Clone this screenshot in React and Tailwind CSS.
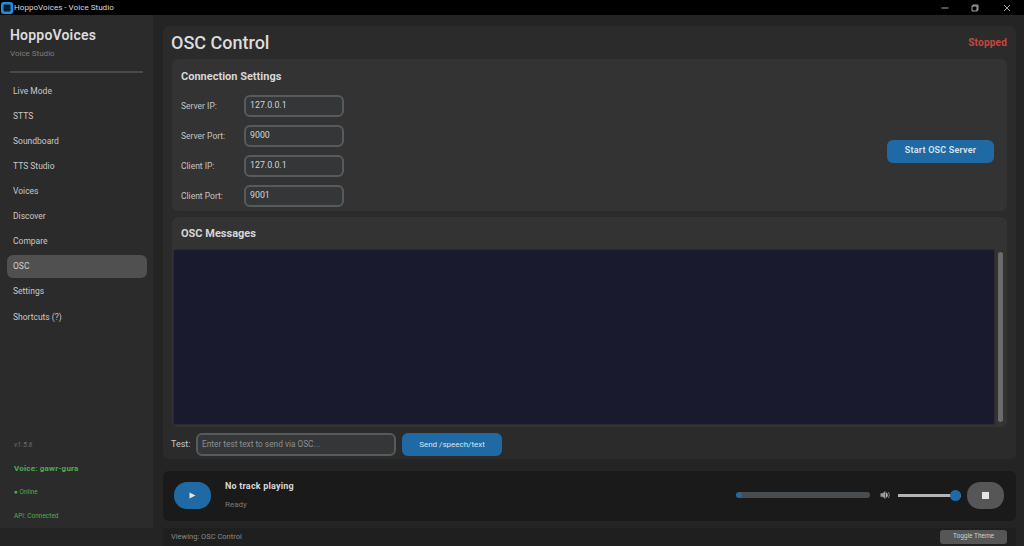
const navItems = [
  "Live Mode",
  "STTS",
  "Soundboard",
  "TTS Studio",
  "Voices",
  "Discover",
  "Compare",
  "OSC",
  "Settings",
];

const connectionFields = [
  ["Server IP:", "127.0.0.1"],
  ["Server Port:", "9000"],
  ["Client IP:", "127.0.0.1"],
  ["Client Port:", "9001"],
];

function TitleBar() {
  return (
    <div className="h-[15px] shrink-0 bg-black flex items-center text-[#d8d8d8]">
      <svg width="12" height="12" viewBox="0 0 12 12" className="ml-px">
        <rect x="0" y="0" width="12" height="12" rx="2.5" fill="#1c8fe0" />
        <rect x="2.5" y="2.5" width="7" height="7" rx="1" fill="#0b1b2a" />
      </svg>
      <span className="ml-px text-[8.1px] leading-none">HoppoVoices - Voice Studio</span>
      <div className="ml-auto flex items-center text-[#d0d0d0]">
        <svg width="8" height="8" viewBox="0 0 8 8" className="mr-[22px]">
          <path d="M0.5 4H7.5" stroke="currentColor" strokeWidth="0.8" />
        </svg>
        <svg width="8" height="8" viewBox="0 0 8 8" className="mr-[24px]">
          <path d="M2 2V1H7V6H6M1 2H6V7H1Z" fill="none" stroke="currentColor" strokeWidth="0.8" />
        </svg>
        <svg width="8" height="8" viewBox="0 0 8 8" className="mr-[13px]">
          <path d="M1 1L7 7M7 1L1 7" stroke="currentColor" strokeWidth="0.8" />
        </svg>
      </div>
    </div>
  );
}

function Sidebar() {
  return (
    <aside className="w-[153px] h-[513px] shrink-0 bg-[#2b2b2b] flex flex-col">
      <div className="pl-[10px] pt-[12px]">
        <div className="text-[14px] leading-[17px] font-semibold tracking-[0.2px] text-[#dcdcdc]">HoppoVoices</div>
        <div className="mt-[5px] text-[8px] leading-[10px] text-[#7d7d7d]">Voice Studio</div>
      </div>
      <div className="mx-[10px] mt-[12px] h-[2px] bg-[#4a4a4a]" />
      <nav className="mt-[7px] ml-[7px] mr-[6px] flex flex-col gap-[2px]">
        {navItems.map((item) => (
          <div
            key={item}
            className={
              item === "OSC"
                ? "h-[23px] flex items-center pl-[6px] rounded-[6px] bg-[#505050] text-[8.5px] text-[#d0d0d0]"
                : "h-[23px] flex items-center pl-[6px] text-[8.5px] text-[#c8c8c8]"
            }
          >
            {item}
          </div>
        ))}
        <div className="h-[25px] flex items-center pl-[6px] text-[8.5px] text-[#c8c8c8]">Shortcuts (?)</div>
      </nav>
      <div className="mt-auto pl-[14px] pb-[7px] flex flex-col">
        <div className="text-[7px] leading-[9px] italic text-[#6f6f6f]">v1.5.6</div>
        <div className="mt-[13px] text-[8px] leading-[11px] font-bold tracking-[0.2px] text-[#4caf50]">Voice: gawr-gura</div>
        <div className="mt-[14px] text-[6.5px] leading-[9px] text-[#4caf50]">● Online</div>
        <div className="mt-[15px] text-[6.5px] leading-[9px] text-[#4caf50]">API: Connected</div>
      </div>
    </aside>
  );
}

function ConnectionCard() {
  return (
    <section className="h-[152px] shrink-0 rounded-[6px] bg-[#333333] pl-[9px] pr-[13px] flex items-center justify-between">
      <div className="self-start">
        <h2 className="pt-[11px] text-[11px] leading-[14px] font-bold text-[#d6d6d6]">Connection Settings</h2>
        <div className="mt-[11px] flex flex-col gap-[8px]">
          {connectionFields.map(([label, value]) => (
            <div key={label} className="flex items-center">
              <span className="w-[63px] text-[8.5px] text-[#c4c4c4]">{label}</span>
              <div className="w-[100px] h-[22px] rounded-[6px] border-2 border-[#565b5e] bg-[#343638] pl-[4px] flex items-center text-[8.8px] text-[#d4d4d4]">
                {value}
              </div>
            </div>
          ))}
        </div>
      </div>
      <button className="mt-[32px] w-[107px] h-[23px] rounded-[6px] bg-[#1f6aa5] text-[9px] font-semibold tracking-[0.2px] text-[#dce4ea]">
        Start OSC Server
      </button>
    </section>
  );
}

function MessagesCard() {
  return (
    <section className="h-[210px] shrink-0 rounded-[6px] bg-[#333333] flex flex-col">
      <h2 className="pl-[9px] pt-[10px] text-[11px] leading-[14px] font-bold text-[#d6d6d6]">OSC Messages</h2>
      <div className="mt-[8px] flex">
        <div className="ml-px w-[822px] h-[176px] rounded-[2px] bg-[#1a1a2e] border border-[#2b2b2b]" />
        <div className="ml-[3px] mt-[3px] w-[5px] h-[170px] rounded-full bg-[#6b6b6b]" />
      </div>
    </section>
  );
}

function TestRow() {
  return (
    <div className="mt-[6px] -ml-px flex items-center">
      <span className="w-[25px] text-[9px] text-[#c8c8c8]">Test:</span>
      <div className="w-[200px] h-[23px] rounded-[6px] border-2 border-[#565b5e] bg-[#343638] pl-[4px] flex items-center text-[8.3px] text-[#8f8f8f]">
        Enter test text to send via OSC...
      </div>
      <button className="ml-[6px] w-[100px] h-[23px] rounded-[6px] bg-[#1f6aa5] text-[8px] text-[#dce4ea]">
        Send /speech/text
      </button>
    </div>
  );
}

function Player() {
  return (
    <div className="mt-[12px] h-[50px] shrink-0 rounded-[6px] bg-[#1a1a1a] flex items-center pl-[11px] pr-[12px] pb-[2px]">
      <button className="w-[37px] h-[27px] rounded-[13px] bg-[#1f6aa5] flex items-center justify-center">
        <svg width="7" height="7" viewBox="0 0 7 7">
          <path d="M0.5 0.5L6.5 3.5L0.5 6.5Z" fill="#e6e6e6" />
        </svg>
      </button>
      <div className="ml-[14px]">
        <div className="text-[9px] leading-[11px] font-bold tracking-[0.2px] text-[#d8d8d8]">No track playing</div>
        <div className="mt-[8px] text-[8px] leading-[10px] text-[#7a7a7a]">Ready</div>
      </div>
      <div className="ml-auto flex items-center">
        <div className="w-[134px] h-[6px] rounded-full bg-[#4a4d50] overflow-hidden">
          <div className="w-[6px] h-full rounded-full bg-[#1f6aa5]" />
        </div>
        <svg width="10" height="10" viewBox="0 0 10 10" className="ml-[10px]">
          <path d="M0.5 3.2H2.6L5.4 1V9L2.6 6.8H0.5Z" fill="#9a9a9a" />
          <path d="M6.2 2.2C8.2 3.4 8.2 6.6 6.2 7.8Z" fill="#d4d4d4" />
          <path d="M8.2 2C9.6 3.6 9.6 6.4 8.2 8" fill="none" stroke="#8a8a8a" strokeWidth="0.9" />
        </svg>
        <div className="ml-[8px] w-[63px] h-[3px] bg-[#b4b4b4] flex items-center justify-end">
          <div className="w-[11px] h-[11px] rounded-full bg-[#1f6aa5] shrink-0" />
        </div>
        <button className="ml-[6px] w-[37px] h-[27px] rounded-[13px] bg-[#565656] flex items-center justify-center">
          <div className="w-[7px] h-[7px] bg-[#e4e4e4]" />
        </button>
      </div>
    </div>
  );
}

function StatusBar() {
  return (
    <div className="mt-[7px] h-[18px] shrink-0 rounded-t-[4px] bg-[#1f1f1f] flex items-center justify-between pl-[8px] pr-[9px]">
      <span className="text-[7.5px] text-[#8a8a8a]">Viewing: OSC Control</span>
      <button className="w-[67px] h-[14px] rounded-[3px] bg-[#565656] text-[6.5px] text-[#cfcfcf]">Toggle Theme</button>
    </div>
  );
}

export default function App() {
  return (
    <div className="w-[1024px] h-[546px] overflow-hidden flex flex-col bg-[#242424] font-['Roboto',sans-serif]">
      <TitleBar />
      <div className="flex-1 flex min-h-0">
        <Sidebar />
        <main className="ml-[10px] mr-[8px] flex-1 flex flex-col pt-[11px]">
          <div className="h-[433px] shrink-0 rounded-[6px] bg-[#2b2b2b] px-[9px] flex flex-col">
            <div className="h-[33px] shrink-0 flex items-center justify-between">
              <h1 className="-ml-px text-[18px] leading-[22px] font-medium text-[#dcdcdc]">OSC Control</h1>
              <span className="text-[10px] font-bold tracking-[0.2px] text-[#c8463c]">Stopped</span>
            </div>
            <ConnectionCard />
            <div className="mt-[6px] flex flex-col">
              <MessagesCard />
              <TestRow />
            </div>
          </div>
          <Player />
          <StatusBar />
        </main>
      </div>
    </div>
  );
}
